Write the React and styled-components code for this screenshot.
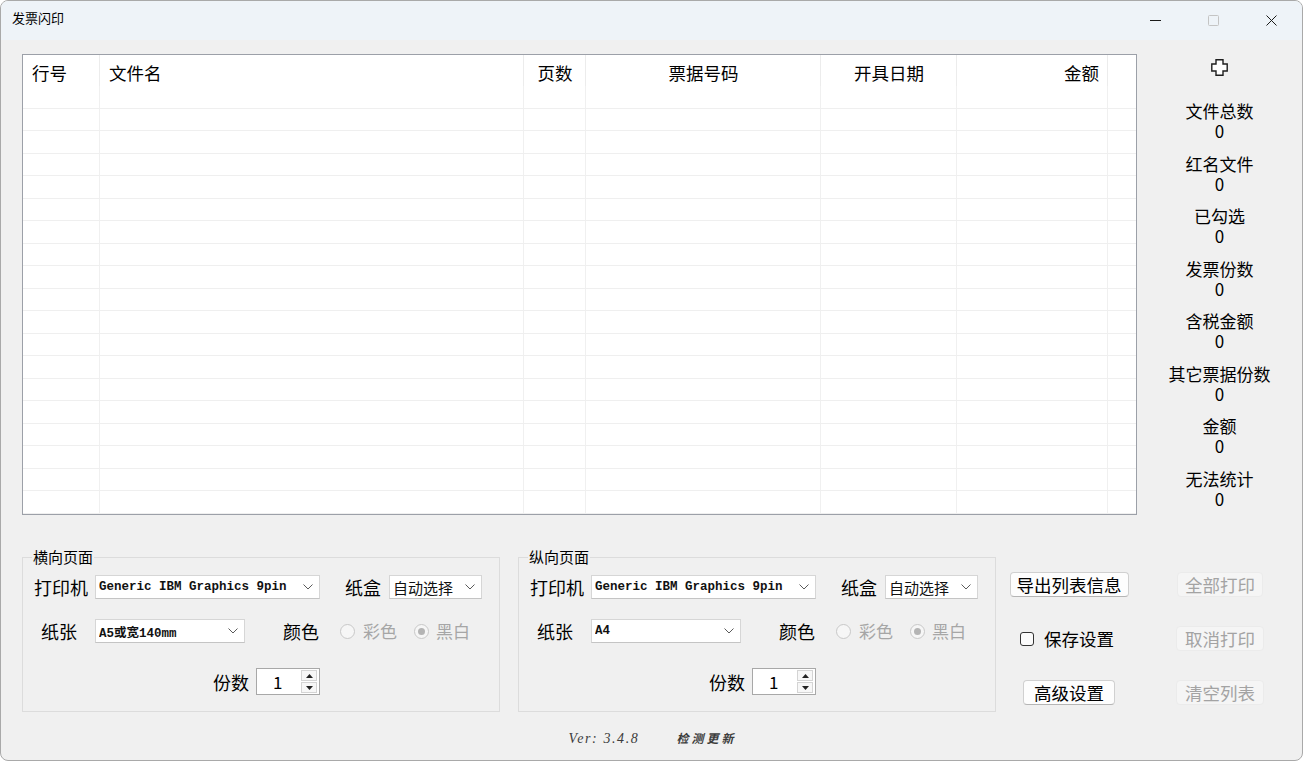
import React from 'react';
import styled, { createGlobalStyle } from 'styled-components';

const GlobalStyle = createGlobalStyle`
  html, body {
    margin: 0;
    padding: 0;
    background: #ffffff;
  }
  * {
    box-sizing: border-box;
  }
`;

const CJK = `"Noto Sans CJK SC", "Noto Sans", sans-serif`;
const MONO = `"Liberation Mono", "Noto Sans CJK SC", monospace`;

const columns = [
  { title: '行号', width: 77, align: 'left' },
  { title: '文件名', width: 424, align: 'left' },
  { title: '页数', width: 62, align: 'center' },
  { title: '票据号码', width: 235, align: 'center' },
  { title: '开具日期', width: 136, align: 'center' },
  { title: '金额', width: 151, align: 'right' },
  { title: '', width: 28, align: 'left', last: true },
];

const stats = ['文件总数', '红名文件', '已勾选', '发票份数', '含税金额', '其它票据份数', '金额', '无法统计'];

const rows = Array.from({ length: 19 }, (_, i) => i);

const Window = styled.div`
  width: 1303px;
  height: 761px;
  border: 1px solid #a9a9a9;
  border-radius: 8px;
  overflow: hidden;
  background: #f0f0f0;
  display: flex;
  flex-direction: column;
  font-family: ${CJK};
  color: #000;
`;

const TitleBar = styled.div`
  height: 39px;
  flex: none;
  background: #eef3f8;
  display: flex;
  align-items: center;
  padding-left: 11px;
`;

const Title = styled.div`
  font-size: 13px;
  line-height: 16px;
  margin-top: -5px;
  flex: 1;
`;

const Controls = styled.div`
  display: flex;
  height: 100%;
  margin-right: 2px;
`;

const ControlButton = styled.div`
  width: 58px;
  height: 100%;
  display: flex;
  align-items: center;
  justify-content: center;
`;

const Main = styled.div`
  display: flex;
  align-items: flex-start;
  height: 475px;
  flex: none;
  padding: 14px 0 0 21px;
`;

const Table = styled.div`
  width: 1115px;
  height: 461px;
  border: 1px solid #9ca0a8;
  background: #ffffff;
  overflow: hidden;
  flex: none;
`;

const HeaderRow = styled.div`
  display: flex;
  height: 31px;
`;

const HeaderCell = styled.div`
  width: ${(p) => p.$w}px;
  flex: none;
  height: 31px;
  font-size: 17.5px;
  line-height: 31px;
  padding: 2px 8px 0 9px;
  text-align: ${(p) => p.$align};
  border-right: ${(p) => (p.$last ? 'none' : '1px solid #ececec')};
  white-space: nowrap;
`;

const Row = styled.div`
  display: flex;
  height: 22.5px;
  border-bottom: 1px solid #efefef;
`;

const Cell = styled.div`
  width: ${(p) => p.$w}px;
  flex: none;
  border-right: ${(p) => (p.$last ? 'none' : '1px solid #f0f0f0')};
`;

const Sidebar = styled.div`
  flex: 1;
  height: 461px;
  display: flex;
  flex-direction: column;
  align-items: center;
  padding-top: 5px;
`;

const PlusIcon = styled.svg`
  width: 17px;
  height: 17px;
  flex: none;
  margin-bottom: 25px;
`;

const Stat = styled.div`
  height: 52.5px;
  flex: none;
  text-align: center;
  font-size: 17px;
  line-height: 20px;
  white-space: nowrap;
`;

const Bottom = styled.div`
  display: flex;
  align-items: flex-start;
  margin-top: 42px;
  padding-left: 21px;
`;

const Group = styled.div`
  position: relative;
  width: 478px;
  height: 155px;
  border: 1px solid #dcdcdc;
  margin-right: ${(p) => p.$gap || 0}px;
  flex: none;
`;

const Legend = styled.div`
  position: absolute;
  left: 9px;
  top: -10px;
  padding: 0 1px;
  background: #f0f0f0;
  font-size: 15px;
  line-height: 18px;
`;

const FormRow = styled.div`
  display: flex;
  align-items: center;
  height: ${(p) => p.$h}px;
  margin-top: ${(p) => p.$mt}px;
  padding-left: ${(p) => p.$pl}px;
`;

const Label = styled.span`
  font-size: 18px;
  line-height: 24px;
  margin-left: ${(p) => p.$ml || 0}px;
  white-space: nowrap;
`;

const Select = styled.div`
  width: ${(p) => p.$w}px;
  height: 24px;
  margin-left: ${(p) => p.$ml}px;
  background: #ffffff;
  border: 1px solid #d6d6d6;
  border-bottom-color: #c4c4c4;
  display: flex;
  align-items: center;
  padding: 0 6px 0 3px;
  flex: none;
`;

const SelectText = styled.span`
  flex: 1;
  font-family: ${(p) => (p.$mono ? MONO : CJK)};
  font-size: ${(p) => (p.$mono ? '12.5px' : '15px')};
  font-weight: ${(p) => (p.$mono ? 600 : 400)};
  color: #111;
  white-space: nowrap;
  overflow: hidden;
`;

const Radio = styled.span`
  width: 15px;
  height: 15px;
  border-radius: 50%;
  border: 1px solid #c8c8c8;
  background: #f6f6f6;
  margin-left: ${(p) => p.$ml}px;
  display: flex;
  align-items: center;
  justify-content: center;
  flex: none;

  &::after {
    content: '';
    display: ${(p) => (p.$checked ? 'block' : 'none')};
    width: 7px;
    height: 7px;
    border-radius: 50%;
    background: #b4b4b4;
  }
`;

const RadioText = styled.span`
  font-size: 17px;
  line-height: 24px;
  color: #a6a6a6;
  margin-left: ${(p) => p.$ml}px;
`;

const Spinner = styled.div`
  width: 64px;
  height: 27px;
  margin-left: 7px;
  background: #ffffff;
  border: 1px solid #a8a8a8;
  display: flex;
  align-items: center;
  padding-right: 2px;
`;

const SpinValue = styled.span`
  flex: 1;
  font-size: 17px;
  line-height: 24px;
  padding-left: 16px;
`;

const SpinButtons = styled.div`
  display: flex;
  flex-direction: column;
  gap: 1px;
`;

const SpinButton = styled.div`
  width: 16px;
  height: 11px;
  border: 1px solid #d4d4d4;
  background: #f7f7f7;
  display: flex;
  align-items: center;
  justify-content: center;
`;

const ButtonGrid = styled.div`
  display: grid;
  grid-template-columns: 146px 156px;
  grid-auto-rows: 25px;
  row-gap: 29px;
  padding-top: 15px;
`;

const Button = styled.div`
  justify-self: center;
  height: 25px;
  padding: 0 ${(p) => p.$px}px;
  display: flex;
  align-items: center;
  font-size: 17.5px;
  line-height: 1;
  border-radius: 4px;
  white-space: nowrap;
  color: ${(p) => (p.$disabled ? '#a3a3a3' : '#000')};
  background: ${(p) => (p.$disabled ? '#f5f5f5' : '#fdfdfd')};
  border: 1px solid ${(p) => (p.$disabled ? '#ebebeb' : '#d0d0d0')};
  border-bottom-color: ${(p) => (p.$disabled ? '#ebebeb' : '#b5b5b5')};
`;

const CheckRow = styled.label`
  justify-self: center;
  display: flex;
  align-items: center;
  gap: 10px;
  font-size: 17.5px;
  margin-left: -4px;
`;

const CheckBox = styled.span`
  width: 14px;
  height: 14px;
  border: 1px solid #333;
  border-radius: 3px;
  background: #fbfbfb;
`;

const Footer = styled.div`
  display: flex;
  justify-content: center;
  align-items: center;
  gap: 37px;
  margin-top: 19px;
  padding-left: 2px;
  line-height: 16px;
  color: #3c3c3c;
`;

const Version = styled.span`
  font-family: "Liberation Serif", serif;
  font-style: italic;
  font-size: 14px;
  letter-spacing: 1.6px;
`;

const UpdateLink = styled.span`
  font-family: "Liberation Serif", "Noto Sans CJK SC", serif;
  font-style: italic;
  font-weight: bold;
  font-size: 12px;
  letter-spacing: 3px;
`;

const Chevron = () => (
  <svg width="10" height="6" viewBox="0 0 10 6">
    <path d="M0.5 0.5 L5 5 L9.5 0.5" fill="none" stroke="#5a5a5a" strokeWidth="1" />
  </svg>
);

const Triangle = ({ up }) => (
  <svg width="7" height="4" viewBox="0 0 7 4">
    <path d={up ? 'M0 4 L3.5 0 L7 4 Z' : 'M0 0 L3.5 4 L7 0 Z'} fill="#222" />
  </svg>
);

const PageGroup = ({ title, paper, gap }) => (
  <Group $gap={gap}>
    <Legend>{title}</Legend>
    <FormRow $h={24} $mt={17} $pl={11}>
      <Label>打印机</Label>
      <Select $w={225} $ml={7}>
        <SelectText $mono>Generic IBM Graphics 9pin</SelectText>
        <Chevron />
      </Select>
      <Label $ml={25}>纸盒</Label>
      <Select $w={93} $ml={8}>
        <SelectText>自动选择</SelectText>
        <Chevron />
      </Select>
    </FormRow>
    <FormRow $h={24} $mt={20} $pl={18}>
      <Label>纸张</Label>
      <Select $w={150} $ml={18}>
        <SelectText $mono>{paper}</SelectText>
        <Chevron />
      </Select>
      <Label $ml={38}>颜色</Label>
      <Radio $ml={21} />
      <RadioText $ml={8}>彩色</RadioText>
      <Radio $ml={17} $checked />
      <RadioText $ml={7}>黑白</RadioText>
    </FormRow>
    <FormRow $h={27} $mt={25} $pl={190}>
      <Label>份数</Label>
      <Spinner>
        <SpinValue>1</SpinValue>
        <SpinButtons>
          <SpinButton><Triangle up /></SpinButton>
          <SpinButton><Triangle /></SpinButton>
        </SpinButtons>
      </Spinner>
    </FormRow>
  </Group>
);

export default function App() {
  return (
    <>
      <GlobalStyle />
      <Window>
        <TitleBar>
          <Title>发票闪印</Title>
          <Controls>
            <ControlButton>
              <svg width="11" height="11" viewBox="0 0 11 11">
                <path d="M0 5.5 H11" stroke="#1a1a1a" strokeWidth="1" />
              </svg>
            </ControlButton>
            <ControlButton>
              <svg width="11" height="11" viewBox="0 0 11 11">
                <rect x="0.5" y="0.5" width="10" height="10" rx="1" fill="none" stroke="#c4c4c4" />
              </svg>
            </ControlButton>
            <ControlButton>
              <svg width="11" height="11" viewBox="0 0 11 11">
                <path d="M0.5 0.5 L10.5 10.5 M10.5 0.5 L0.5 10.5" stroke="#1a1a1a" strokeWidth="1" />
              </svg>
            </ControlButton>
          </Controls>
        </TitleBar>

        <Main>
          <Table>
            <HeaderRow>
              {columns.map((c, i) => (
                <HeaderCell key={i} $w={c.width} $align={c.align} $last={c.last}>
                  {c.title}
                </HeaderCell>
              ))}
            </HeaderRow>
            {rows.map((r) => (
              <Row key={r}>
                {columns.map((c, i) => (
                  <Cell key={i} $w={c.width} $last={c.last} />
                ))}
              </Row>
            ))}
          </Table>
          <Sidebar>
            <PlusIcon viewBox="0 0 17 17">
              <path
                d="M5 0.8 H12 V5 H16.2 V12 H12 V16.2 H5 V12 H0.8 V5 H5 Z"
                fill="#ffffff"
                stroke="#1e1e1e"
                strokeWidth="1.4"
              />
            </PlusIcon>
            {stats.map((s) => (
              <Stat key={s}>
                {s}
                <br />
                0
              </Stat>
            ))}
          </Sidebar>
        </Main>

        <Bottom>
          <PageGroup title="横向页面" paper="A5或宽140mm" gap={18} />
          <PageGroup title="纵向页面" paper="A4" />
          <ButtonGrid>
            <Button $px={6}>导出列表信息</Button>
            <Button $px={7} $disabled>全部打印</Button>
            <CheckRow>
              <CheckBox />
              保存设置
            </CheckRow>
            <Button $px={8} $disabled>取消打印</Button>
            <Button $px={10}>高级设置</Button>
            <Button $px={8} $disabled>清空列表</Button>
          </ButtonGrid>
        </Bottom>

        <Footer>
          <Version>Ver: 3.4.8</Version>
          <UpdateLink>检测更新</UpdateLink>
        </Footer>
      </Window>
    </>
  );
}
